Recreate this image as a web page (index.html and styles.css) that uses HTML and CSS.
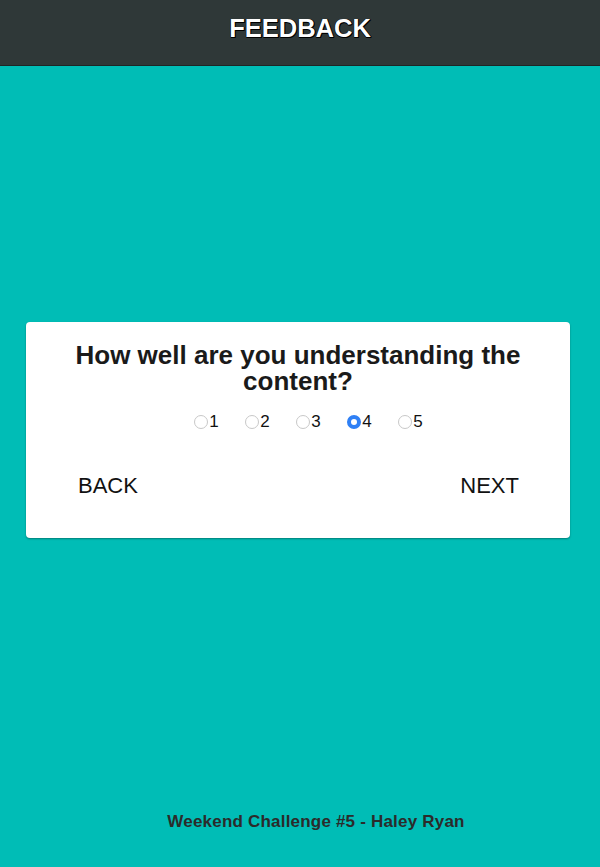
FILE: index.html
```html
<!DOCTYPE html>
<html>
<head>
<meta charset="utf-8">
<link rel="stylesheet" href="styles.css">
</head>
<body>
<header class="topbar"><h1 class="title">FEEDBACK</h1></header>
<main class="stage">
  <section class="card">
    <h2 class="question">How well are you understanding the content?</h2>
    <div class="options">
      <label class="opt"><input type="radio" name="r" class="radio"><span>1</span></label>
      <label class="opt"><input type="radio" name="r" class="radio"><span>2</span></label>
      <label class="opt"><input type="radio" name="r" class="radio"><span>3</span></label>
      <label class="opt"><input type="radio" name="r" class="radio" checked><span>4</span></label>
      <label class="opt"><input type="radio" name="r" class="radio"><span>5</span></label>
    </div>
    <div class="nav">
      <button class="btn">BACK</button>
      <button class="btn">NEXT</button>
    </div>
  </section>
</main>
<footer class="foot">Weekend Challenge #5 - Haley Ryan</footer>
</body>
</html>
```
FILE: styles.css
```css
html, body { margin: 0; padding: 0; }
body {
  width: 600px;
  height: 867px;
  background: #00bdb6;
  font-family: "Liberation Sans", Arial, sans-serif;
  display: flex;
  flex-direction: column;
  overflow: hidden;
}
.topbar {
  height: 65px;
  background: #2f3838;
  border-bottom: 1px solid #1f2626;
  display: flex;
  justify-content: center;
  align-items: flex-start;
}
.title {
  margin: 13px 0 0;
  font-size: 25.5px;
  line-height: 30px;
  font-weight: bold;
  color: #fff;
  text-shadow: 1px 1px 0 #000, -0.5px -0.5px 0 #000, 1px 0 0 #000, 0 1px 0 #000;
}
.stage {
  flex: 1;
  display: flex;
  flex-direction: column;
  padding-top: 256px;
}
.card {
  margin: 0 30px 0 26px;
  height: 216px;
  background: #fff;
  border-radius: 4px;
  box-shadow: 0 1px 2px rgba(0,0,0,0.35);
  display: flex;
  flex-direction: column;
  align-items: stretch;
  box-sizing: border-box;
  padding-top: 20px;
}
.question {
  margin: 0 30px;
  text-align: center;
  font-size: 26px;
  line-height: 26px;
  font-weight: bold;
  color: #1a1a1a;
}
.options {
  display: flex;
  justify-content: center;
  gap: 26.5px;
  margin-top: 18px;
  padding-left: 21px;
}
.opt {
  display: flex;
  align-items: center;
  font-size: 17px;
  color: #111;
  line-height: 20px;
}
.radio {
  appearance: none;
  -webkit-appearance: none;
  width: 14px;
  height: 14px;
  margin: 0 1px 0 0;
  border: 1px solid #c8c8c8;
  border-radius: 50%;
  background: #fff;
  box-sizing: border-box;
}
.radio:checked {
  border: 4.5px solid #2f80f5;
  background: #fff;
}
.nav {
  display: flex;
  justify-content: space-between;
  margin-top: 41px;
  padding: 0 51px 0 52px;
}
.btn {
  background: none;
  border: none;
  padding: 0;
  font-family: "Liberation Sans", Arial, sans-serif;
  font-size: 22px;
  line-height: 26px;
  color: #111;
}
.foot {
  height: 55px;
  padding-top: 29px;
  text-align: center;
  padding-left: 32px;
  font-size: 17px;
  line-height: 20px;
  letter-spacing: 0.2px;
  font-weight: bold;
  color: #2b2b2b;
}
```
